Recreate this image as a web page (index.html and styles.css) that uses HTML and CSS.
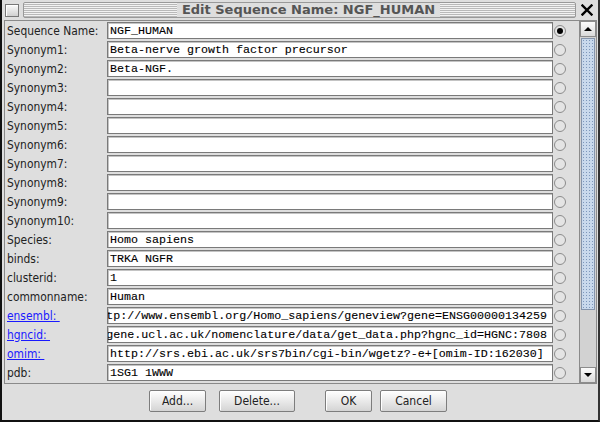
FILE: index.html
```html
<!DOCTYPE html>
<html lang="en">
<head>
    <meta charset="UTF-8">
    <title>Edit Sequence Name: NGF_HUMAN</title>
    <link rel="stylesheet" href="styles.css">
</head>
<body>
    <div class="window">
        <div class="titlebar">
            <span class="sysbox"></span>
            <div class="grip">
                <span class="title">Edit Sequence Name: NGF_HUMAN</span>
            </div>
            <svg class="close" width="12" height="12" viewBox="0 0 12 12">
                <path d="M1.5 1.5 L10.5 10.5 M10.5 1.5 L1.5 10.5" stroke="#000" stroke-width="2.4" stroke-linecap="square"/>
            </svg>
        </div>

        <div class="pane">
            <div class="rows">
                <div class="row"><span class="label">Sequence Name:</span><div class="field">NGF_HUMAN</div><span class="radio on"></span></div>
                <div class="row"><span class="label">Synonym1:</span><div class="field">Beta-nerve growth factor precursor</div><span class="radio"></span></div>
                <div class="row"><span class="label">Synonym2:</span><div class="field">Beta-NGF.</div><span class="radio"></span></div>
                <div class="row"><span class="label">Synonym3:</span><div class="field"></div><span class="radio"></span></div>
                <div class="row"><span class="label">Synonym4:</span><div class="field"></div><span class="radio"></span></div>
                <div class="row"><span class="label">Synonym5:</span><div class="field"></div><span class="radio"></span></div>
                <div class="row"><span class="label">Synonym6:</span><div class="field"></div><span class="radio"></span></div>
                <div class="row"><span class="label">Synonym7:</span><div class="field"></div><span class="radio"></span></div>
                <div class="row"><span class="label">Synonym8:</span><div class="field"></div><span class="radio"></span></div>
                <div class="row"><span class="label">Synonym9:</span><div class="field"></div><span class="radio"></span></div>
                <div class="row"><span class="label">Synonym10:</span><div class="field"></div><span class="radio"></span></div>
                <div class="row"><span class="label">Species:</span><div class="field">Homo sapiens</div><span class="radio"></span></div>
                <div class="row"><span class="label">binds:</span><div class="field">TRKA NGFR</div><span class="radio"></span></div>
                <div class="row"><span class="label">clusterid:</span><div class="field">1</div><span class="radio"></span></div>
                <div class="row"><span class="label">commonname:</span><div class="field">Human</div><span class="radio"></span></div>
                <div class="row"><span class="label"><a class="link">ensembl:&nbsp;</a></span><div class="field end"><span>http://www.ensembl.org/Homo_sapiens/geneview?gene=ENSG00000134259</span></div><span class="radio"></span></div>
                <div class="row"><span class="label"><a class="link">hgncid:&nbsp;</a></span><div class="field end"><span>http://www.gene.ucl.ac.uk/nomenclature/data/get_data.php?hgnc_id=HGNC:7808</span></div><span class="radio"></span></div>
                <div class="row"><span class="label"><a class="link">omim:&nbsp;</a></span><div class="field">http://srs.ebi.ac.uk/srs7bin/cgi-bin/wgetz?-e+[omim-ID:162030]</div><span class="radio"></span></div>
                <div class="row"><span class="label">pdb:</span><div class="field">1SG1 1WWW</div><span class="radio"></span></div>
            </div>

            <div class="scrollbar">
                <div class="arrow up"></div>
                <div class="track"><div class="thumb"></div></div>
                <div class="arrow down"></div>
            </div>
        </div>

        <div class="buttons">
            <button class="btn btn-add">Add...</button>
            <button class="btn btn-delete">Delete...</button>
            <button class="btn btn-ok">OK</button>
            <button class="btn btn-cancel">Cancel</button>
        </div>
    </div>
</body>
</html>
```

FILE: styles.css
```css
:root {
    --bg: #dedede;
    --edge: #8a8a8a;
    --link: #1a1aff;
}

body {
    margin: 0;
    padding: 0;
    background: var(--bg);
    font-family: "DejaVu Sans Condensed", "DejaVu Sans", sans-serif;
    font-stretch: condensed;
    font-size: 11.9px;
    color: #222;
}

.window {
    width: 600px;
    height: 422px;
    box-sizing: border-box;
    border-left: 2px solid #111;
    border-right: 2px solid #333;
    border-bottom: 2px solid #111;
    background: var(--bg);
    display: flex;
    flex-direction: column;
}

/* title bar */
.titlebar {
    height: 20px;
    display: flex;
    align-items: center;
    padding: 0 2px;
}

.sysbox {
    width: 12px;
    height: 11px;
    margin-left: 1px;
    border: 1px solid #777;
    background: linear-gradient(#fafafa, #d0d0d0);
    box-shadow: inset 1px 1px 0 #fff;
}

.grip {
    flex: 1;
    height: 14px;
    margin-left: 4px;
    padding-left: 18px;
    border: 1px solid #999;
    border-radius: 2px;
    background: repeating-linear-gradient(#f2f2f2 0 1px, #b9b9b9 1px 2px);
    display: flex;
    justify-content: center;
    align-items: center;
}

.title {
    background: var(--bg);
    padding: 0 5px;
    font-family: "DejaVu Sans", sans-serif;
    font-stretch: normal;
    font-weight: bold;
    font-size: 13px;
    line-height: 14px;
    color: #555;
}

.close {
    margin: 0 3px 0 5px;
}

/* scroll pane with the rows */
.pane {
    height: 364px;
    margin: 0 1px 0 2px;
    box-sizing: border-box;
    border: 1px solid var(--edge);
    display: flex;
}

.rows {
    flex: 1;
    overflow: hidden;
}

.row {
    height: 19px;
    display: flex;
    align-items: center;
}

.label {
    width: 102px;
    padding-left: 2px;
    box-sizing: border-box;
    white-space: nowrap;
}

.link {
    color: var(--link);
    text-decoration: underline;
}

.field {
    width: 446px;
    height: 17px;
    box-sizing: border-box;
    border: 1px solid #7a7a7a;
    box-shadow: inset 1px 1px 0 #c4c4c4;
    background: #fff;
    padding: 0 5px 0 2px;
    display: flex;
    align-items: center;
    overflow: hidden;
    white-space: nowrap;
    font-family: "Liberation Mono", monospace;
    font-stretch: normal;
    font-size: 11.67px;
    color: #000;
    -webkit-text-stroke: 0.1px #000;
}

/* long values show their tail, as a scrolled text field does */
.field.end {
    justify-content: flex-end;
}

.field.end span {
    flex-shrink: 0;
}

.radio {
    width: 12px;
    height: 12px;
    margin-left: 1px;
    box-sizing: border-box;
    border: 1px solid #8c8c8c;
    border-radius: 50%;
    background: #e4e4e4;
    display: flex;
    justify-content: center;
    align-items: center;
}

.radio.on::after {
    content: "";
    width: 6px;
    height: 6px;
    border-radius: 50%;
    background: #000;
}

/* scrollbar */
.scrollbar {
    width: 16px;
    border-left: 1px solid var(--edge);
    background: #d2d2d2;
    display: flex;
    flex-direction: column;
}

.arrow {
    height: 16px;
    box-sizing: border-box;
    border: 1px solid #8c8c8c;
    background: linear-gradient(#fbfbfb, #dadada);
    display: flex;
    justify-content: center;
    align-items: center;
}

.arrow::after {
    content: "";
    border-left: 4px solid transparent;
    border-right: 4px solid transparent;
}

.arrow.up::after {
    border-bottom: 4px solid #000;
}

.arrow.down::after {
    border-top: 4px solid #000;
}

.track {
    flex: 1;
    padding: 1px 1px 0 1px;
}

.thumb {
    height: 272px;
    box-sizing: border-box;
    border: 1px solid #8494ab;
    background: radial-gradient(circle, #7d97bb 0.6px, transparent 0.9px) 0 0 / 3px 3px, #c9d9ec;
}

/* bottom button row */
.buttons {
    flex: 1;
    display: flex;
    align-items: center;
    padding-left: 147px;
    padding-bottom: 2px;
}

.btn {
    height: 22px;
    border: 1px solid #7d7d7d;
    border-radius: 2px;
    background: linear-gradient(#ffffff, #d4d4d4);
    box-shadow: inset 1px 1px 0 #fff;
    font-family: inherit;
    font-stretch: condensed;
    font-size: 12px;
    color: #222;
    padding: 0;
}

.btn-add { width: 57px; }
.btn-delete { width: 76px; margin-left: 13px; }
.btn-ok { width: 47px; margin-left: 30px; }
.btn-cancel { width: 67px; margin-left: 8px; }
```
